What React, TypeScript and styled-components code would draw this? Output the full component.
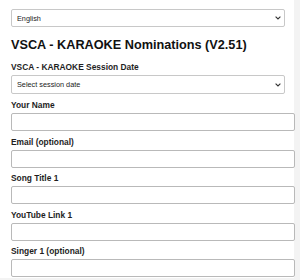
import styled, { createGlobalStyle } from 'styled-components';

const GlobalStyle = createGlobalStyle`
  html, body {
    margin: 0;
    padding: 0;
    background: #f3f3f3;
    font-family: "Liberation Sans", Arial, sans-serif;
    overflow: hidden;
  }
`;

const Card = styled.div`
  width: 274px;
  padding: 9px 9px 1px 11px;
  background: #ffffff;
`;

const SelectWrap = styled.div`
  position: relative;
  width: 274px;
`;

const Select = styled.select<{ $tall?: boolean }>`
  display: block;
  box-sizing: border-box;
  width: 100%;
  height: ${(p) => (p.$tall ? 19 : 18)}px;
  padding: 0 14px 0 5px;
  border: 1px solid #c8c8c8;
  border-radius: 2px;
  background: #ffffff;
  color: #222222;
  font-family: "Liberation Sans", Arial, sans-serif;
  font-size: 7.3px;
  appearance: none;
  -webkit-appearance: none;
  outline: none;
`;

// small chevron drawn over the select
const Chevron = styled.svg`
  position: absolute;
  right: 4px;
  top: 50%;
  margin-top: -2px;
  pointer-events: none;
`;

const Title = styled.h1`
  margin: 11px 0 10px;
  font-size: 12.7px;
  line-height: 15px;
  font-weight: bold;
  color: #111111;
`;

const Field = styled.div<{ $gap?: number }>`
  margin-bottom: ${(p) => p.$gap ?? 6.5}px;
`;

const Label = styled.label`
  display: block;
  margin-bottom: 3px;
  font-size: 8.4px;
  line-height: 9px;
  font-weight: bold;
  color: #1e1e1e;
`;

const Input = styled.input`
  display: block;
  width: 100%;
  height: 16px;
  margin: 0;
  padding: 0 4px;
  border: 1px solid #b9b9b9;
  border-radius: 2px;
  background: #ffffff;
  outline: none;
`;

const fields = [
  'Your Name',
  'Email (optional)',
  'Song Title 1',
  'YouTube Link 1',
  'Singer 1 (optional)',
];

const DropDown = ({ label, tall }: { label: string; tall?: boolean }) => (
  <SelectWrap>
    <Select $tall={tall} defaultValue="">
      <option value="">{label}</option>
    </Select>
    <Chevron width="6" height="4" viewBox="0 0 6 4">
      <path d="M0.6 0.6 L3 3 L5.4 0.6" fill="none" stroke="#333" strokeWidth="1.1" />
    </Chevron>
  </SelectWrap>
);

const App = () => {
  return (
    <>
      <GlobalStyle />
      <Card>
        <DropDown label="English" />
        <Title>VSCA - KARAOKE Nominations (V2.51)</Title>
        <Field $gap={7}>
          <Label>VSCA - KARAOKE Session Date</Label>
          <DropDown label="Select session date" tall />
        </Field>
        {fields.map((name, i) => (
          <Field key={name} $gap={i === fields.length - 1 ? 0 : 6.5}>
            <Label>{name}</Label>
            <Input type="text" />
          </Field>
        ))}
      </Card>
    </>
  );
};

export default App;
